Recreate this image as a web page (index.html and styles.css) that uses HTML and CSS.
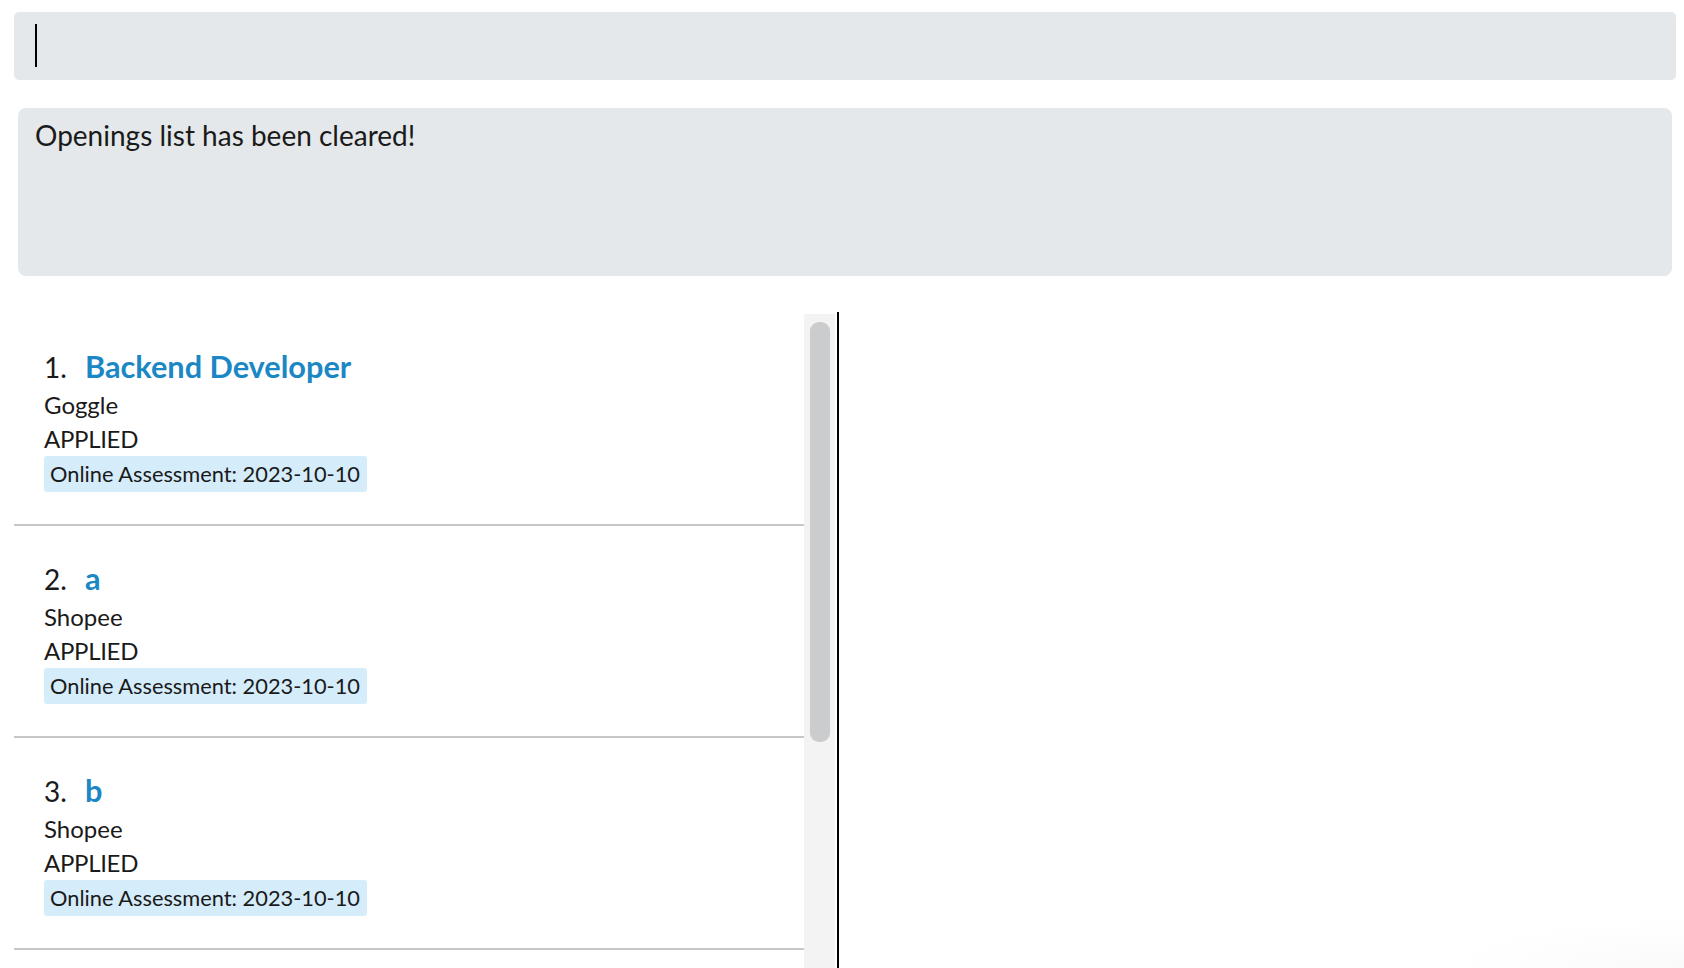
FILE: index.html
```html
<!DOCTYPE html>
<html lang="en">
<head>
<meta charset="utf-8">
<title>Openings</title>
<link rel="stylesheet" href="styles.css">
</head>
<body>
<div class="app">
  <div class="command"><span class="caret"></span></div>
  <div class="result">Openings list has been cleared!</div>
  <div class="main">
    <div class="list-pane">
      <div class="list">
        <div class="card">
          <div class="title"><span class="num">1.</span><span class="name">Backend Developer</span></div>
          <div class="company">Goggle</div>
          <div class="status">APPLIED</div>
          <div class="tags"><span class="tag">Online Assessment: 2023-10-10</span></div>
        </div>
        <div class="card">
          <div class="title"><span class="num">2.</span><span class="name">a</span></div>
          <div class="company">Shopee</div>
          <div class="status">APPLIED</div>
          <div class="tags"><span class="tag">Online Assessment: 2023-10-10</span></div>
        </div>
        <div class="card">
          <div class="title"><span class="num">3.</span><span class="name">b</span></div>
          <div class="company">Shopee</div>
          <div class="status">APPLIED</div>
          <div class="tags"><span class="tag">Online Assessment: 2023-10-10</span></div>
        </div>
      </div>
      <div class="scrollbar"><div class="thumb"></div></div>
    </div>
    <div class="detail"></div>
  </div>
</div>
</body>
</html>
```

FILE: styles.css
```css
html, body {
  margin: 0;
  padding: 0;
  background: #ffffff;
}
body {
  font-family: Lato, "Open Sans", sans-serif;
  color: #1a1a1a;
  width: 1684px;
  height: 968px;
  overflow: hidden;
}
.app {
  display: flex;
  flex-direction: column;
  height: 968px;
}
.command {
  margin: 12px 8px 0 14px;
  height: 68px;
  background: #e4e8eb;
  border-radius: 5px;
  padding: 12px 0 0 21px;
  box-sizing: border-box;
}
.caret {
  display: block;
  width: 2px;
  height: 43px;
  background: #000;
}
.result {
  margin: 28px 12px 0 18px;
  height: 168px;
  box-sizing: border-box;
  background: #e4e8eb;
  border-radius: 8px;
  padding: 11px 17px;
  font-size: 28px;
  line-height: 1.2;
}
.main {
  margin-top: 36px;
  flex: 1;
  display: flex;
  padding-left: 14px;
  min-height: 0;
}
.list-pane {
  display: flex;
  width: 822px;
  border-right: 2px solid #000;
  padding-top: 2px;
  padding-right: 1px;
  box-sizing: content-box;
  overflow: hidden;
}
.list {
  width: 790px;
  flex: none;
}
.card {
  height: 212px;
  box-sizing: border-box;
  border-bottom: 2px solid #c8c8c8;
  padding: 34px 0 0 30px;
}
.title {
  height: 38px;
  line-height: 38px;
  font-size: 28px;
  white-space: nowrap;
  overflow: hidden;
}
.num {
  display: inline-block;
  width: 41px;
  color: #1a1a1a;
}
.name {
  color: #1b87c4;
  font-weight: 700;
  font-size: 30.7px;
}
.company {
  margin-top: 2px;
  font-size: 24px;
  line-height: 34px;
}
.status {
  font-size: 24px;
  line-height: 34px;
  letter-spacing: -0.3px;
}
.tags {
  display: flex;
}
.tag {
  background: #d5ecfa;
  border-radius: 3px;
  font-size: 21.8px;
  line-height: 36px;
  height: 36px;
  padding: 0 7px 0 6px;
  white-space: nowrap;
}
.scrollbar {
  width: 31px;
  flex: none;
  background: #f3f3f3;
  padding: 8px 5px 0 6px;
  box-sizing: border-box;
}
.thumb {
  height: 420px;
  background: #cbcccd;
  border-radius: 9px;
}
.detail {
  flex: 1;
  background: radial-gradient(ellipse 240px 50px at 100% 100%, #fafafa, rgba(255,255,255,0));
}
```
